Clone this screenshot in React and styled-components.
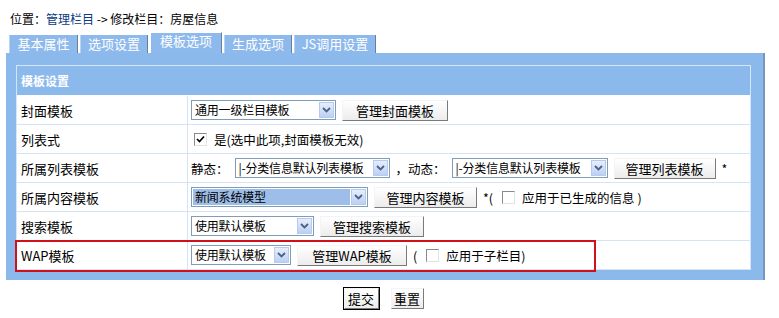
import styled, { createGlobalStyle } from "styled-components";

const GlobalStyle = createGlobalStyle`
    body {
        margin: 0;
        background: #ffffff;
        font-family: "Noto Sans CJK SC", "DejaVu Sans", sans-serif;
        font-size: 12px;
        color: #000;
    }
`;

const tabs = ["基本属性", "选项设置", "模板选项", "生成选项", "JS调用设置"];

export default function App() {
    return (
        <Page>
            <GlobalStyle />
            <Crumb>
                位置：<CrumbLink>管理栏目</CrumbLink> -&gt; 修改栏目：房屋信息
            </Crumb>
            <TabBar>
                {tabs.map((t, i) => (
                    <Tab key={t} $active={i === 2} $w={[69, 68, 72, 68, 82][i]}>
                        {t}
                    </Tab>
                ))}
            </TabBar>
            <Panel>
                <Table>
                    <HeadRow>模板设置</HeadRow>
                    <Row>
                        <Label>封面模板</Label>
                        <Cell>
                            <Select $w={145}>通用一级栏目模板</Select>
                            <Button $w={106}>管理封面模板</Button>
                        </Cell>
                    </Row>
                    <Row>
                        <Label>列表式</Label>
                        <Cell>
                            <Check $checked />
                            <Text>是(选中此项,封面模板无效)</Text>
                        </Cell>
                    </Row>
                    <Row>
                        <Label>所属列表模板</Label>
                        <Cell>
                            <Text>静态：</Text>
                            <Select $w={155}>|-分类信息默认列表模板</Select>
                            <Text>，动态：</Text>
                            <Select $w={156}>|-分类信息默认列表模板</Select>
                            <Button $w={102}>管理列表模板</Button>
                            <Text>*</Text>
                        </Cell>
                    </Row>
                    <Row>
                        <Label>所属内容模板</Label>
                        <Cell>
                            <Select $w={177} $selected>新闻系统模型</Select>
                            <Button $w={103}>管理内容模板</Button>
                            <Text>*(</Text>
                            <Check />
                            <Text>应用于已生成的信息 )</Text>
                        </Cell>
                    </Row>
                    <Row>
                        <Label>搜索模板</Label>
                        <Cell>
                            <Select $w={123}>使用默认模板</Select>
                            <Button $w={104}>管理搜索模板</Button>
                        </Cell>
                    </Row>
                    <Row $marked>
                        <Label>WAP模板</Label>
                        <Cell>
                            <Select $w={100}>使用默认模板</Select>
                            <Button $w={110}>管理WAP模板</Button>
                            <Text>(</Text>
                            <Check />
                            <Text>应用于子栏目)</Text>
                        </Cell>
                    </Row>
                </Table>
            </Panel>
            <Actions>
                <Button $w={35} $default>提交</Button>
                <Button $w={33}>重置</Button>
            </Actions>
        </Page>
    );
}

function Select({ $w, $selected, children }) {
    return (
        <SelectBox $w={$w}>
            <SelectText $selected={$selected}>{children}</SelectText>
            <Arrow>
                <svg width="9" height="6" viewBox="0 0 9 6">
                    <path d="M1 1 L4.5 4.5 L8 1" fill="none" stroke="#4d6185" strokeWidth="1.8" />
                </svg>
            </Arrow>
        </SelectBox>
    );
}

function Check({ $checked }) {
    return (
        <CheckBox>
            {$checked && (
                <svg width="9" height="9" viewBox="0 0 9 9">
                    <path d="M1 4 L3.5 6.5 L8 1.5" fill="none" stroke="#000" strokeWidth="1.7" />
                </svg>
            )}
        </CheckBox>
    );
}

const Page = styled.div`
    width: 779px;
    height: 318px;
    padding-top: 10px;
    box-sizing: border-box;
`;

const Crumb = styled.div`
    margin-left: 10px;
    height: 18px;
    line-height: 18px;
`;

const CrumbLink = styled.span`
    color: #0b3a82;
`;

const TabBar = styled.div`
    display: flex;
    align-items: flex-end;
    gap: 2px;
    margin-left: 9px;
    height: 25px;
`;

const Tab = styled.div`
    width: ${(p) => p.$w}px;
    height: ${(p) => (p.$active ? 21 : 18)}px;
    box-sizing: border-box;
    background: #8db9ec;
    color: #ffffff;
    text-align: center;
    line-height: ${(p) => (p.$active ? 16 : 18)}px;
    border-right: 1px solid #66819f;
    border-left: 1px solid ${(p) => (p.$active ? "#ffffff" : "#b9d3f2")};
    border-top: ${(p) => (p.$active ? "1px solid #ffffff" : "none")};
    font-size: 13px;
`;

const Panel = styled.div`
    margin-left: 6px;
    width: 759px;
    box-sizing: border-box;
    background: #8cb9ec;
    padding: 12px 12px 10px 10px;
    border-right: 2px solid #7896bb;
`;

const Table = styled.div`
    display: flex;
    flex-direction: column;
    border: 1px solid #d6e5f7;
    border-bottom: none;
`;

const HeadRow = styled.div`
    height: 29px;
    line-height: 29px;
    padding-left: 4px;
    color: #ffffff;
    font-weight: bold;
    font-size: 12px;
    border-bottom: 1px solid #ffffff;
`;

const Row = styled.div`
    display: grid;
    grid-template-columns: 171px 1fr;
    height: 28px;
    background: #ffffff;
    border-bottom: 1px solid #d6e3f4;
    position: relative;

    ${(p) =>
        p.$marked &&
        `
        &::after {
            content: "";
            position: absolute;
            left: -2px;
            top: -1px;
            width: 577px;
            height: 28px;
            border: 2px solid #d0101b;
            pointer-events: none;
        }
    `}
`;

const Label = styled.div`
    display: flex;
    align-items: center;
    padding-left: 4px;
    border-right: 1px solid #d6e3f4;
    font-size: 13px;
`;

const Cell = styled.div`
    display: flex;
    align-items: center;
    gap: 6px;
    padding-left: 3px;
`;

const Text = styled.span`
    font-size: 12.5px;
    white-space: nowrap;
`;

const SelectBox = styled.div`
    width: ${(p) => p.$w}px;
    height: 20px;
    box-sizing: border-box;
    border: 1px solid #7f9db9;
    background: #ffffff;
    display: flex;
    align-items: stretch;
    padding: 1px;
`;

const SelectText = styled.div`
    flex: 1;
    min-width: 0;
    line-height: 16px;
    padding-left: 2px;
    white-space: nowrap;
    font-size: 12px;
    letter-spacing: -0.2px;
    background: ${(p) => (p.$selected ? "#9dbee8" : "transparent")};
    margin-right: 1px;
`;

const Arrow = styled.div`
    width: 15px;
    flex-shrink: 0;
    display: flex;
    align-items: center;
    justify-content: center;
    background: linear-gradient(#e6eefc, #bcd0f3);
    border: 1px solid #b6c9ee;
    box-sizing: border-box;
`;

const Button = styled.div`
    width: ${(p) => p.$w}px;
    height: 21px;
    box-sizing: border-box;
    display: flex;
    align-items: center;
    justify-content: center;
    background: linear-gradient(#ffffff, #ececec);
    border: 1px solid;
    border-color: #f4f4f4 #7a7a7a #7a7a7a #f4f4f4;
    outline: ${(p) => (p.$default ? "1px solid #000" : "none")};
    font-size: 13px;
    white-space: nowrap;
`;

const CheckBox = styled.div`
    width: 13px;
    height: 13px;
    box-sizing: border-box;
    border: 1px solid #8a8a8a;
    border-color: #8a8a8a #e2e2e2 #e2e2e2 #8a8a8a;
    background: #ffffff;
    display: flex;
    align-items: center;
    justify-content: center;
    margin: 0 1px 0 3px;
`;

const Actions = styled.div`
    display: flex;
    justify-content: center;
    gap: 12px;
    margin-top: 8px;
    padding-right: 12px;
`;
